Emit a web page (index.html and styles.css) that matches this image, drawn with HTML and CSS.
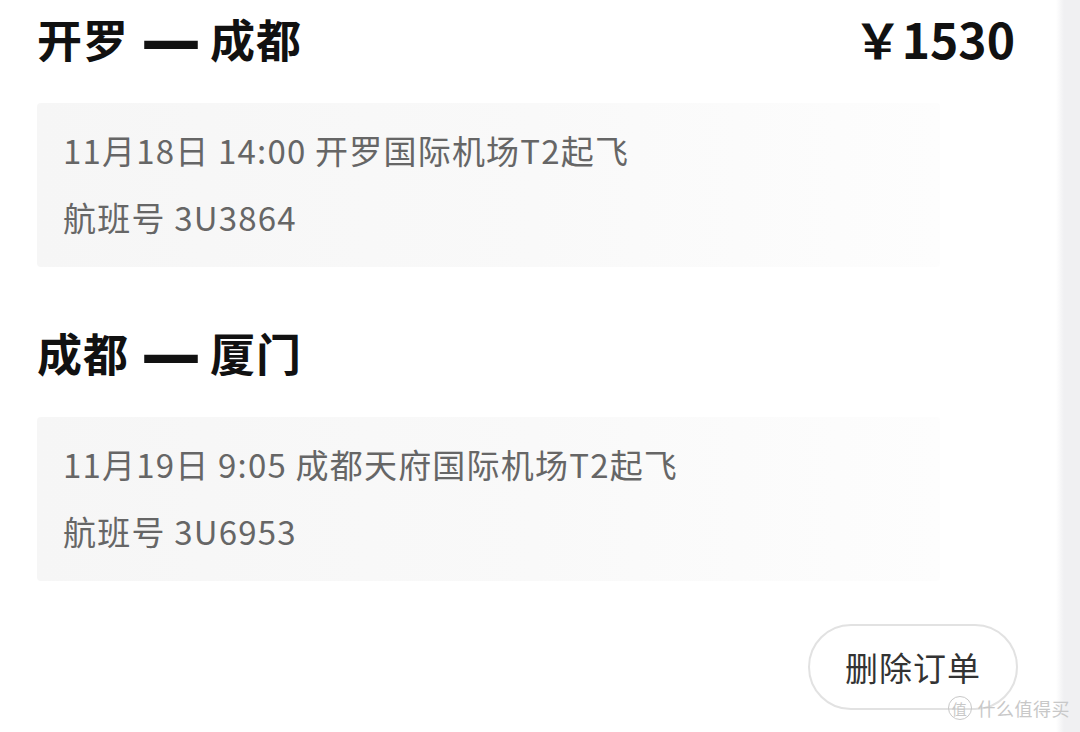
FILE: index.html
```html
<!DOCTYPE html>
<html lang="zh-CN">
	<head>
		<meta charset="utf-8">
		<title>订单详情</title>
		<link rel="stylesheet" href="styles.css">
	</head>
	<body>
		<div class="order">
			<div class="leg-head">
				<h2>开罗<span class="dash">—</span>成都</h2>
				<span class="price">￥1530</span>
			</div>
			<div class="leg-info">
				<p>11月18日 14:00 开罗国际机场T2起飞</p>
				<p>航班号 3U3864</p>
			</div>

			<div class="leg-head second">
				<h2>成都<span class="dash">—</span>厦门</h2>
			</div>
			<div class="leg-info">
				<p>11月19日 9:05 成都天府国际机场T2起飞</p>
				<p>航班号 3U6953</p>
			</div>

			<div class="actions">
				<button class="btn-delete">删除订单</button>
			</div>
			<div class="mark"><span class="mark-ring">值</span>什么值得买</div>
		</div>
	</body>
</html>
```

FILE: styles.css
```css
html, body
{
	margin: 0;
	height: 100%;
}

body
{
	font-family: "Noto Sans CJK SC", "Noto Sans", sans-serif;
	background: linear-gradient(to right, #fff 1056px, #f0f0f2 1064px);
	overflow: hidden;
}

.order
{
	position: relative;
	width: 1060px;
	height: 732px;
	box-sizing: border-box;
	padding: 12px 45px 0 37px;
}

.leg-head
{
	display: flex;
	justify-content: space-between;
	align-items: center;
	height: 56px;
}

.leg-head.second
{
	margin-top: 59px;
}

h2
{
	margin: 0;
	font-size: 45px;
	line-height: 56px;
	font-weight: bold;
	letter-spacing: 1px;
	color: #111;
}

/* the CJK dash is too thin, borrow a heavier one */
h2 .dash
{
	display: inline-block;
	font-family: "DejaVu Sans", sans-serif;
	font-size: 50px;
	width: 50px;
	text-align: center;
	margin: 0 14px 0 17px;
	transform: scale(1.2, 1.3);
}

.price
{
	font-size: 48px;
	font-weight: bold;
	color: #111;
	line-height: 56px;
	margin-top: -4px;
}

.leg-info
{
	width: 903px;
	margin-top: 35px;
	padding: 14px 26px 16px;
	box-sizing: border-box;
	background: linear-gradient(to right, #f6f6f6, #f9f9f9 55%, #fdfdfd);
	border-radius: 4px;
}

.leg-info p
{
	margin: 0;
	font-size: 33px;
	letter-spacing: 1.2px;
	line-height: 67px;
	color: #666;
}

.actions
{
	display: flex;
	justify-content: flex-end;
	margin-top: 43px;
}

.btn-delete
{
	width: 210px;
	height: 86px;
	margin-right: -3px;
	border: 2px solid #e2e2e2;
	border-radius: 43px;
	background: #fff;
	font-family: inherit;
	font-size: 33px;
	letter-spacing: 1px;
	color: #333;
	cursor: pointer;
}

.mark
{
	position: absolute;
	right: -10px;
	bottom: 11px;
	display: flex;
	align-items: center;
	font-size: 18px;
	letter-spacing: 0.5px;
	color: #c8c8c8;
}

.mark-ring
{
	display: inline-flex;
	align-items: center;
	justify-content: center;
	width: 22px;
	height: 22px;
	border: 1.5px solid #c8c8c8;
	border-radius: 50%;
	font-size: 15px;
	margin-right: 6px;
}
```
